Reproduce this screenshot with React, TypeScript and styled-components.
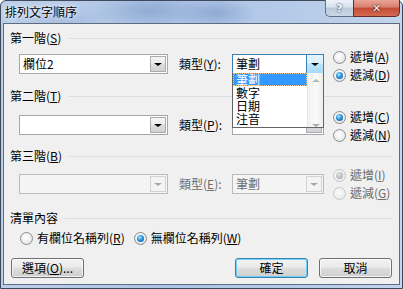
import React from 'react';
import styled, { createGlobalStyle, css } from 'styled-components';

const Global = createGlobalStyle`
  html, body { margin: 0; padding: 0; background: #ffffff; }
  body { font-family: "Noto Sans CJK TC", "Liberation Sans", sans-serif; font-size: 12px; color: #000; }
  * { box-sizing: border-box; }
`;

const FONT = `"Noto Sans CJK TC", "Liberation Sans", sans-serif`;

const Window = styled.div`
  width: 403px;
  height: 289px;
  border: 1px solid #3e4a5c;
  border-radius: 6px 6px 0 0;
  padding: 0 2px 3px 2px;
  display: flex;
  flex-direction: column;
  background:
    radial-gradient(ellipse 60px 18px at 150px 10px, rgba(120, 150, 200, 0.55), transparent),
    radial-gradient(ellipse 40px 16px at 215px 12px, rgba(110, 140, 195, 0.5), transparent),
    radial-gradient(ellipse 50px 14px at 60px 18px, rgba(150, 175, 215, 0.5), transparent),
    linear-gradient(90deg, #bccfe9 0%, #afc5e5 40%, #b4cae8 70%, #c3d4ec 100%);
`;

const TitleBar = styled.div`
  height: 22px;
  display: flex;
  align-items: flex-start;
  padding-left: 2px;
`;

const TitleText = styled.div`
  font-family: ${FONT};
  font-size: 12px;
  line-height: 14px;
  margin-top: 4px;
  color: #000;
  text-shadow: 0 0 6px rgba(255, 255, 255, 0.9), 0 0 3px rgba(255, 255, 255, 0.9);
`;

const Caption = styled.div`
  margin-left: auto;
  margin-top: -1px;
  display: flex;
`;

const CaptionButton = styled.div<{ $close?: boolean }>`
  height: 17px;
  width: ${p => (p.$close ? '47px' : '28px')};
  display: flex;
  align-items: center;
  justify-content: center;
  border: 1px solid #5d6f88;
  border-top: none;
  font-family: "DejaVu Sans", sans-serif;
  font-weight: bold;
  font-size: 11px;
  ${p =>
    p.$close
      ? css`
          border-radius: 0 0 5px 0;
          border-color: #6b2a22;
          background: linear-gradient(#e8a597 0%, #d77f6f 45%, #c44a36 50%, #d26a52 100%);
          color: #fff;
          text-shadow: 0 0 2px #3a0c05, 0 0 1px #3a0c05;
        `
      : css`
          border-radius: 0 0 0 5px;
          border-right: none;
          background: linear-gradient(#eef3fa 0%, #d7e1ee 45%, #bcc9da 50%, #c9d6e6 100%);
          color: #fff;
          text-shadow: 0 0 2px #38475d, 0 0 1px #38475d;
        `}
`;

const Client = styled.div`
  flex: 1;
  background: #f0f0f0;
  border: 1px solid #5d6c80;
  display: flex;
  flex-direction: column;
  padding: 7px 5px 0 6px;
  font-family: ${FONT};
  font-size: 12px;
`;

const GroupHeader = styled.div<{ $gap?: number }>`
  display: flex;
  align-items: center;
  gap: 7px;
  height: 14px;
  line-height: 14px;
  margin-top: ${p => p.$gap ?? 0}px;
  white-space: nowrap;
  &::after {
    content: '';
    flex: 1;
    height: 1px;
    margin-right: 1px;
    background: #d5dfe5;
  }
`;

const Key = styled.span`
  text-decoration: underline;
`;

const SortRow = styled.div<{ $gap: number; $combo: number }>`
  display: flex;
  align-items: flex-start;
  padding-left: 9px;
  height: 36px;
  margin-top: ${p => p.$gap}px;
  & > .combo-area {
    margin-top: ${p => p.$combo}px;
  }
`;

const ComboArea = styled.div`
  display: flex;
  align-items: center;
`;

const Combo = styled.div<{ $w: number; $focus?: boolean; $disabled?: boolean }>`
  position: relative;
  width: ${p => p.$w}px;
  height: 20px;
  border: 1px solid ${p => (p.$focus ? '#3c7fb1' : p.$disabled ? '#b8bcc0' : '#a4a8ad')};
  background: ${p => (p.$disabled ? '#f4f4f4' : '#ffffff')};
  display: flex;
  align-items: stretch;
  color: ${p => (p.$disabled ? '#6d6d6d' : '#000')};
`;

const ComboValue = styled.div`
  flex: 1;
  padding-left: 3px;
  line-height: 18px;
  white-space: nowrap;
`;

const DropButton = styled.div<{ $focus?: boolean; $disabled?: boolean }>`
  width: 16px;
  margin: 1px 1px 1px 0;
  display: flex;
  align-items: center;
  justify-content: center;
  border: 1px solid ${p => (p.$focus ? '#3c7fb1' : p.$disabled ? '#d0d3d6' : '#a9acb0')};
  background: ${p =>
    p.$focus
      ? 'linear-gradient(#e6f5fd 0%, #d9f0fc 45%, #bee6fd 50%, #a7d9f5 100%)'
      : p.$disabled
      ? '#f4f4f4'
      : 'linear-gradient(#f4f4f4 0%, #ececec 45%, #dddddd 50%, #d2d2d2 100%)'};
  ${p => p.$focus && css`margin: 0; width: 17px; border-right: none; border-top: none; border-bottom: none;`}
`;

const Arrow = styled.span<{ $disabled?: boolean; $up?: boolean; $size?: number }>`
  width: 0;
  height: 0;
  border-left: ${p => p.$size ?? 4}px solid transparent;
  border-right: ${p => p.$size ?? 4}px solid transparent;
  ${p =>
    p.$up
      ? css`border-bottom: ${(p.$size ?? 4) - 1}px solid ${p.$disabled ? '#b8b8b8' : '#000'};`
      : css`border-top: ${(p.$size ?? 4) - 1}px solid ${p.$disabled ? '#a8a8a8' : '#000'};`}
`;

const TypeLabel = styled.div<{ $disabled?: boolean }>`
  width: 53px;
  margin-left: 11px;
  white-space: nowrap;
  line-height: 14px;
  color: ${p => (p.$disabled ? '#6d6d6d' : '#000')};
`;

const RadioGroup = styled.div`
  display: flex;
  flex-direction: column;
  margin-left: 9px;
`;

const RadioLine = styled.label<{ $disabled?: boolean }>`
  display: flex;
  align-items: center;
  gap: 4px;
  height: 18px;
  line-height: 14px;
  white-space: nowrap;
  color: ${p => (p.$disabled ? '#6d6d6d' : '#000')};
`;

const RadioCircle = styled.span<{ $checked?: boolean; $disabled?: boolean }>`
  position: relative;
  width: 13px;
  height: 13px;
  flex-shrink: 0;
  border-radius: 50%;
  border: 1px solid ${p => (p.$disabled ? '#c4c6c8' : '#8b8d90')};
  background: ${p =>
    p.$disabled
      ? 'radial-gradient(circle at 45% 40%, #fbfbfb 0%, #efefef 60%, #e0e0e0 100%)'
      : 'radial-gradient(circle at 45% 40%, #ffffff 0%, #eeeeee 55%, #cfd1d3 100%)'};
  ${p =>
    p.$checked &&
    css`
      &::after {
        content: '';
        position: absolute;
        left: 2px;
        top: 2px;
        width: 7px;
        height: 7px;
        border-radius: 50%;
        background: ${p.$disabled
          ? 'radial-gradient(circle at 40% 35%, #e4e4e4 0%, #bdbdbd 55%, #9c9c9c 100%)'
          : 'radial-gradient(circle at 40% 35%, #aee6ff 0%, #2d94dc 45%, #0b4a86 100%)'};
      }
    `}
`;

const ListPopup = styled.div`
  position: absolute;
  top: 100%;
  left: -1px;
  width: 92px;
  height: 55px;
  background: #fff;
  border: 1px solid #646464;
  border-top: none;
  display: flex;
  z-index: 5;
`;

const ListItems = styled.div`
  flex: 1;
  display: flex;
  flex-direction: column;
  padding-top: 0;
`;

const ListItem = styled.div<{ $selected?: boolean }>`
  height: 13px;
  line-height: 13px;
  padding-left: 3px;
  white-space: nowrap;
  ${p =>
    p.$selected &&
    css`
      background: #3399ff;
      color: #fff;
      outline: 1px dotted #f2c58a;
      outline-offset: -1px;
    `}
`;

const ScrollBar = styled.div`
  width: 16px;
  border-left: 1px solid #e6e6e6;
  background: linear-gradient(90deg, #f1f1f1, #fafafa 50%, #eeeeee);
  display: flex;
  flex-direction: column;
  justify-content: space-between;
  align-items: center;
  padding: 6px 0 0;
`;

const BottomRadios = styled.div`
  display: flex;
  align-items: center;
  gap: 9px;
  height: 18px;
  margin-top: 4px;
  padding-left: 10px;
`;

const Footer = styled.div`
  display: flex;
  align-items: center;
  margin-top: 11px;
  padding: 0 2px 0 1px;
  gap: 11px;
`;

const Spacer = styled.div`
  flex: 1;
`;

const PushButton = styled.div<{ $default?: boolean }>`
  width: 73px;
  height: 20px;
  border: 1px solid ${p => (p.$default ? '#3c7fb1' : '#707070')};
  border-radius: 3px;
  display: flex;
  align-items: center;
  justify-content: center;
  line-height: 14px;
  background: linear-gradient(#f2f2f2 0%, #ebebeb 45%, #dddddd 50%, #cfcfcf 100%);
  box-shadow: inset 0 0 0 1px ${p => (p.$default ? 'rgba(72, 205, 255, 0.75)' : 'rgba(255,255,255,0.7)')};
`;

type RadioProps = { label: React.ReactNode; checked?: boolean; disabled?: boolean };
const Radio = ({ label, checked, disabled }: RadioProps) => (
  <RadioLine $disabled={disabled}>
    <RadioCircle $checked={checked} $disabled={disabled} />
    <span>{label}</span>
  </RadioLine>
);

type RowProps = {
  gap: number;
  combo: number;
  field: string;
  typeLabel: React.ReactNode;
  typeValue: string;
  disabled?: boolean;
  open?: boolean;
  asc: React.ReactNode;
  desc: React.ReactNode;
  ascChecked?: boolean;
};

const Row = ({ gap, combo, field, typeLabel, typeValue, disabled, open, asc, desc, ascChecked }: RowProps) => (
  <SortRow $gap={gap} $combo={combo}>
    <ComboArea className="combo-area">
      <Combo $w={149} $disabled={disabled}>
        <ComboValue>{field}</ComboValue>
        <DropButton $disabled={disabled}>
          <Arrow $disabled={disabled} />
        </DropButton>
      </Combo>
      <TypeLabel $disabled={disabled}>{typeLabel}</TypeLabel>
      <Combo $w={92} $focus={open} $disabled={disabled}>
        <ComboValue>{typeValue}</ComboValue>
        <DropButton $focus={open} $disabled={disabled}>
          <Arrow $disabled={disabled} />
        </DropButton>
        {open && (
          <ListPopup>
            <ListItems>
              <ListItem $selected>筆劃</ListItem>
              <ListItem>數字</ListItem>
              <ListItem>日期</ListItem>
              <ListItem>注音</ListItem>
            </ListItems>
            <ScrollBar>
              <Arrow $up $disabled $size={4} />
              <Arrow $disabled $size={4} />
            </ScrollBar>
          </ListPopup>
        )}
      </Combo>
    </ComboArea>
    <RadioGroup>
      <Radio label={asc} checked={ascChecked} disabled={disabled} />
      <Radio label={desc} checked={!ascChecked} disabled={disabled} />
    </RadioGroup>
  </SortRow>
);

export default function App() {
  return (
    <>
      <Global />
      <Window>
        <TitleBar>
          <TitleText>排列文字順序</TitleText>
          <Caption>
            <CaptionButton>?</CaptionButton>
            <CaptionButton $close>✕</CaptionButton>
          </Caption>
        </TitleBar>
        <Client>
          <GroupHeader>
            <span>
              第一階(<Key>S</Key>)
            </span>
          </GroupHeader>
          <Row
            gap={3}
            combo={6}
            field="欄位2"
            typeLabel={<>類型(<Key>Y</Key>):</>}
            typeValue="筆劃"
            open
            asc={<>遞增(<Key>A</Key>)</>}
            desc={<>遞減(<Key>D</Key>)</>}
          />
          <GroupHeader $gap={5}>
            <span>
              第二階(<Key>T</Key>)
            </span>
          </GroupHeader>
          <Row
            gap={5}
            combo={7}
            field=""
            typeLabel={<>類型(<Key>P</Key>):</>}
            typeValue=""
            ascChecked
            asc={<>遞增(<Key>C</Key>)</>}
            desc={<>遞減(<Key>N</Key>)</>}
          />
          <GroupHeader $gap={5}>
            <span>
              第三階(<Key>B</Key>)
            </span>
          </GroupHeader>
          <Row
            gap={3}
            combo={8}
            field=""
            typeLabel={<>類型(<Key>E</Key>):</>}
            typeValue="筆劃"
            disabled
            ascChecked
            asc={<>遞增(<Key>I</Key>)</>}
            desc={<>遞減(<Key>G</Key>)</>}
          />
          <GroupHeader $gap={9}>
            <span>清單內容</span>
          </GroupHeader>
          <BottomRadios>
            <Radio label={<>有欄位名稱列(<Key>R</Key>)</>} />
            <Radio checked label={<>無欄位名稱列(<Key>W</Key>)</>} />
          </BottomRadios>
          <Footer>
            <PushButton>
              選項(<Key>O</Key>)...
            </PushButton>
            <Spacer />
            <PushButton $default>確定</PushButton>
            <PushButton>取消</PushButton>
          </Footer>
        </Client>
      </Window>
    </>
  );
}
